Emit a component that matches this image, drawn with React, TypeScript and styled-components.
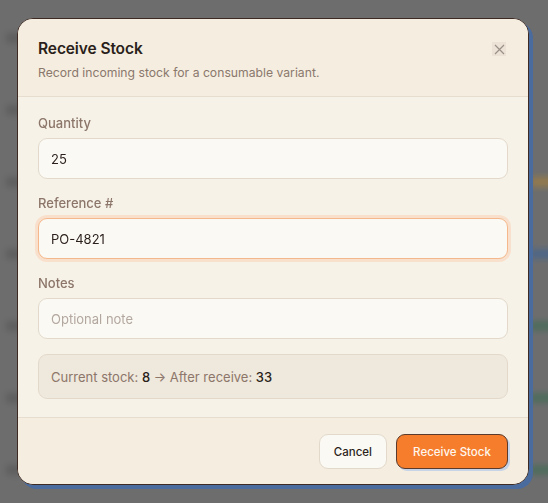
import { createGlobalStyle, styled, css } from 'styled-components'

const Global = createGlobalStyle`
  html, body { margin: 0; padding: 0; }
  body {
    width: 548px;
    height: 503px;
    overflow: hidden;
    background: #6d6d6d;
    font-family: Inter, "Noto Sans", "DejaVu Sans", sans-serif;
  }
`

const Page = styled.div`
  display: flex;
  flex-direction: column;
  padding-top: 2px;
  filter: blur(3px);
`
const PageRow = styled.div`
  height: 72px;
  display: flex;
  align-items: center;
  justify-content: space-between;
  padding: 0 0 0 6px;
`
const PageText = styled.div`
  width: 26px;
  height: 10px;
  background: #4f4f4f;
  border-radius: 2px;
`
const Badge = styled.div<{ $c?: string }>`
  width: 26px;
  height: 10px;
  margin-right: -8px;
  border-radius: 3px;
  background: ${(p) => p.$c || 'transparent'};
`

const Overlay = styled.div`
  position: fixed;
  inset: 0;
  background: rgba(110, 110, 110, 0.5);
`

const Dialog = styled.div`
  position: fixed;
  left: 17px;
  top: 18px;
  width: 510px;
  background: #f7f2e8;
  border: 1.5px solid #3d2a22;
  border-radius: 16px;
  box-shadow: 4px 4px 0 #4a6b9e;
  overflow: hidden;
  display: flex;
  flex-direction: column;
`

const Header = styled.div`
  position: relative;
  background: #f5eddf;
  padding: 19px 20px 14px;
  border-bottom: 1px solid #e6ddcf;
`
const Title = styled.h2`
  margin: 0;
  font-size: 15.5px;
  font-weight: 600;
  color: #2a1f1a;
  line-height: 22px;
  letter-spacing: -0.1px;
`
const Subtitle = styled.p`
  margin: 4px 0 0;
  font-size: 12.2px;
  color: #8a786d;
  line-height: 18px;
`
const CloseButton = styled.button`
  position: absolute;
  right: 22px;
  top: 23px;
  width: 14px;
  height: 14px;
  padding: 0;
  border: none;
  background: #ece3d6;
  color: #9b9088;
  display: flex;
  align-items: center;
  justify-content: center;
  cursor: pointer;
`

const Body = styled.div`
  display: flex;
  flex-direction: column;
  gap: 15px;
  padding: 17px 20px 18px;
`
const Field = styled.div`
  display: flex;
  flex-direction: column;
  gap: 6px;
`
const Label = styled.label`
  font-size: 13px;
  line-height: 18px;
  color: #8c766a;
  font-weight: 500;
`
const Input = styled.input<{ $focus?: boolean }>`
  box-sizing: border-box;
  height: 41px;
  width: 100%;
  padding: 0 12px;
  border-radius: 9px;
  border: 1px solid #e2d9cb;
  background: #fbf9f4;
  font-family: inherit;
  font-size: 13px;
  color: #2a1f1a;
  outline: none;
  &::placeholder { color: #b3a89f; }
  ${(p) =>
    p.$focus &&
    css`
      border-color: #f4b88c;
      box-shadow: 0 0 0 3px #f8e0cc;
    `}
`
const Info = styled.div`
  box-sizing: border-box;
  height: 45px;
  display: flex;
  align-items: center;
  padding: 0 12px;
  border-radius: 9px;
  border: 1px solid #e2d9cb;
  background: #efe8dc;
  font-size: 13px;
  color: #8c766a;
  b { font-weight: 500; color: #2a1f1a; }
`

const Footer = styled.div`
  display: flex;
  justify-content: flex-end;
  gap: 9px;
  padding: 16px 20px 15px;
  background: #f5eddf;
  border-top: 1px solid #e6ddcf;
`
const Button = styled.button<{ $primary?: boolean }>`
  height: 35px;
  padding: 0 14px;
  border-radius: 9px;
  font-family: inherit;
  font-size: 11.5px;
  font-weight: 500;
  cursor: pointer;
  ${(p) =>
    p.$primary
      ? css`
          min-width: 112px;
          background: #f57d2b;
          color: #fff7ef;
          border: 1px solid #5a3a2c;
          box-shadow: 2px 2px 0 #c7d3e6;
        `
      : css`
          min-width: 68px;
          background: #fbf9f4;
          color: #2a1f1a;
          border: 1px solid #e2d9cb;
        `}
`

const rows = ['', '', '#b8862c', '#2f5f9f', '#2f6a4c', '#2f6a4c', '#2f6a4c']

export default function App() {
  return (
    <>
      <Global />
      <Page>
        {rows.map((c, i) => (
          <PageRow key={i}>
            <PageText />
            <Badge $c={c} />
          </PageRow>
        ))}
      </Page>
      <Overlay />
      <Dialog>
        <Header>
          <Title>Receive Stock</Title>
          <Subtitle>Record incoming stock for a consumable variant.</Subtitle>
          <CloseButton aria-label="Close">
            <svg width="11" height="11" viewBox="0 0 11 11" fill="none" stroke="currentColor" strokeWidth="1.2">
              <path d="M1 1L10 10M10 1L1 10" />
            </svg>
          </CloseButton>
        </Header>
        <Body>
          <Field>
            <Label>Quantity</Label>
            <Input defaultValue="25" />
          </Field>
          <Field>
            <Label>Reference #</Label>
            <Input $focus defaultValue="PO-4821" />
          </Field>
          <Field>
            <Label>Notes</Label>
            <Input placeholder="Optional note" />
          </Field>
          <Info>
            Current stock:&nbsp;<b>8</b>&nbsp;→ After receive:&nbsp;<b>33</b>
          </Info>
        </Body>
        <Footer>
          <Button>Cancel</Button>
          <Button $primary>Receive Stock</Button>
        </Footer>
      </Dialog>
    </>
  )
}
